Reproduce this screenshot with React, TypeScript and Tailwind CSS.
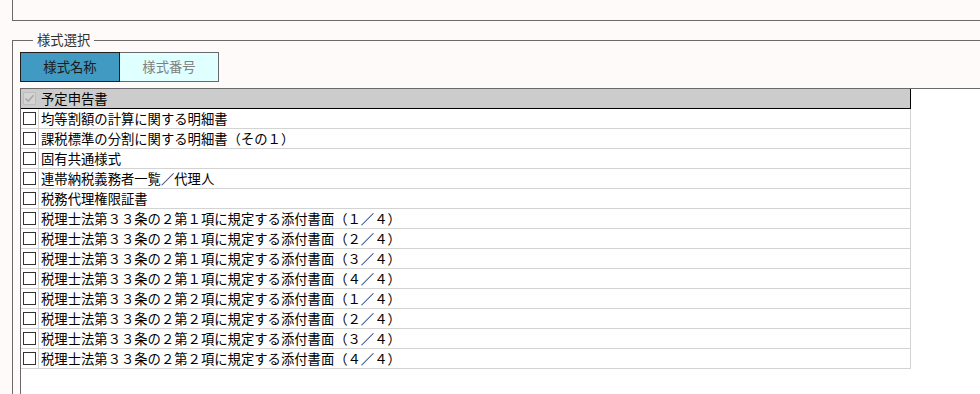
import React from 'react';

const rows: string[] = [
  '均等割額の計算に関する明細書',
  '課税標準の分割に関する明細書（その１）',
  '固有共通様式',
  '連帯納税義務者一覧／代理人',
  '税務代理権限証書',
  '税理士法第３３条の２第１項に規定する添付書面（１／４）',
  '税理士法第３３条の２第１項に規定する添付書面（２／４）',
  '税理士法第３３条の２第１項に規定する添付書面（３／４）',
  '税理士法第３３条の２第１項に規定する添付書面（４／４）',
  '税理士法第３３条の２第２項に規定する添付書面（１／４）',
  '税理士法第３３条の２第２項に規定する添付書面（２／４）',
  '税理士法第３３条の２第２項に規定する添付書面（３／４）',
  '税理士法第３３条の２第２項に規定する添付書面（４／４）',
];

const font = { fontFamily: '"Noto Sans CJK JP", "Noto Sans", sans-serif' };

const CheckBox: React.FC<{ disabled?: boolean }> = ({ disabled }) =>
  disabled ? (
    <div className="w-[13px] h-[13px] border border-[#bdbdbd] bg-[#d4d4d4] flex items-center justify-center">
      <svg width="11" height="11" viewBox="0 0 11 11">
        <path d="M1.5 5.5 L4.2 8.2 L9.5 2.2" fill="none" stroke="#a6a6a6" strokeWidth="1.5" />
      </svg>
    </div>
  ) : (
    <div className="w-[13px] h-[13px] border border-[#333333] bg-white" />
  );

const App: React.FC = () => {
  return (
    <div className="w-[980px] h-[394px] overflow-hidden bg-[#fffafa] text-black" style={font}>
      {/* upper panel (only its bottom edge is visible) */}
      <div className="ml-[12px] h-[21px] border-l border-b border-[#696969]" />

      <fieldset className="ml-[12px] mt-[11px] border-t border-l border-[#696969] pl-[7px] h-[400px] min-w-0">
        <legend className="ml-[13px] px-[4px] text-[13.33px] leading-[16px] text-[#333333]">
          様式選択
        </legend>

        <div className="flex mt-[4px]">
          <div className="w-[100px] h-[30px] border border-[#1e1e1e] bg-[#419ac2] flex items-center justify-center text-[13.33px] text-[#1a1a1a]">
            様式名称
          </div>
          <div className="w-[99px] h-[30px] border-t border-r border-b border-[#696969] bg-[#e0ffff] flex items-center justify-center text-[13.33px] text-[#808080]">
            様式番号
          </div>
        </div>

        <div className="mt-[6px] -mr-[4px] h-[320px] bg-white border-t border-l border-[#696969]">
          <div className="w-[890px]">
            <div className="flex h-[20px] bg-[#cccccc] border-b border-r border-black">
              <div className="w-[18px] flex items-center pl-[2px]">
                <CheckBox disabled />
              </div>
              <div className="pl-[2px] text-[13.33px] leading-[19px]">予定申告書</div>
            </div>
            {rows.map((r, i) => (
              <div key={i} className="flex h-[20px] border-b border-r border-[#d3d3d3]">
                <div className="w-[18px] border-r border-[#d3d3d3] flex items-center pl-[2px]">
                  <CheckBox />
                </div>
                <div className="pl-[2px] text-[13.33px] leading-[19px] whitespace-nowrap">{r}</div>
              </div>
            ))}
          </div>
        </div>
      </fieldset>
    </div>
  );
};

export default App;
